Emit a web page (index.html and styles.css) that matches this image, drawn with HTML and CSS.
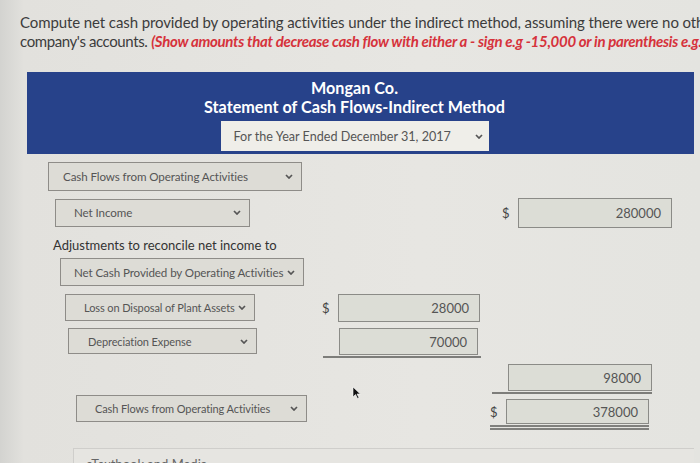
FILE: index.html
```html
<!DOCTYPE html>
<html>
<head>
<meta charset="utf-8">
<title>Statement of Cash Flows</title>
<link rel="stylesheet" href="styles.css">
</head>
<body>
<div class="prompt">
  <p>Compute net cash provided by operating activities under the indirect method, assuming there were no other changes in the</p>
  <p><span class="lead">company's accounts.</span> <span class="warn">(Show amounts that decrease cash flow with either a - sign e.g -15,000 or in parenthesis e.g. (15,000).)</span></p>
</div>

<div class="sheet">
  <div class="header">
    <div class="title">Mongan Co.</div>
    <div class="title">Statement of Cash Flows-Indirect Method</div>
    <div class="select date"><span>For the Year Ended December 31, 2017</span><svg class="chev" viewBox="0 0 8 5"><path d="M1 1 L4 4 L7 1"/></svg></div>
  </div>

  <div class="form">
    <div class="row r1">
      <div class="select s1"><span>Cash Flows from Operating Activities</span><svg class="chev" viewBox="0 0 8 5"><path d="M1 1 L4 4 L7 1"/></svg></div>
    </div>

    <div class="row r2">
      <div class="select s2"><span>Net Income</span><svg class="chev" viewBox="0 0 8 5"><path d="M1 1 L4 4 L7 1"/></svg></div>
      <div class="cell c2"><span class="cur">$</span><div class="amount a2">280000</div></div>
    </div>

    <div class="label">Adjustments to reconcile net income to</div>

    <div class="row r4">
      <div class="select s4"><span>Net Cash Provided by Operating Activities</span><svg class="chev" viewBox="0 0 8 5"><path d="M1 1 L4 4 L7 1"/></svg></div>
    </div>

    <div class="row r5">
      <div class="select s5"><span>Loss on Disposal of Plant Assets</span><svg class="chev" viewBox="0 0 8 5"><path d="M1 1 L4 4 L7 1"/></svg></div>
      <div class="cell c5"><span class="cur">$</span><div class="amount a5">28000</div></div>
    </div>

    <div class="row r6">
      <div class="select s6"><span>Depreciation Expense</span><svg class="chev" viewBox="0 0 8 5"><path d="M1 1 L4 4 L7 1"/></svg></div>
      <div class="cell c6 single"><span class="cur"></span><div class="amount a6">70000</div></div>
    </div>

    <div class="row r7">
      <div class="cell c7 single"><span class="cur"></span><div class="amount a7">98000</div></div>
    </div>

    <div class="row r8">
      <div class="select s8"><span>Cash Flows from Operating Activities</span><svg class="chev" viewBox="0 0 8 5"><path d="M1 1 L4 4 L7 1"/></svg></div>
      <div class="cell c8 double"><span class="cur">$</span><div class="amount a8">378000</div></div>
    </div>

    <div class="media">eTextbook and Media</div>
  </div>
</div>

<svg class="pointer" viewBox="0 0 9 13"><path d="M1 1 L1 11 L3.5 8.5 L5.5 12.5 L7 11.8 L5 8 L8.3 8 Z"/></svg>
</body>
</html>
```

FILE: styles.css
```css
html, body {
  margin: 0;
  padding: 0;
}

body {
  width: 700px;
  height: 463px;
  overflow: hidden;
  position: relative;
  background: linear-gradient(to right, #d3d3d0 0, #e2e1dd 24px, #e7e6e2 60%, #e4e4e0 100%);
  font-family: Lato, "Open Sans", "Liberation Sans", sans-serif;
  color: #3a3a3a;
}

/* ---------- prompt ---------- */
.prompt {
  padding: 13px 0 0 20px;
  font-size: 15px;
  line-height: 19px;
  letter-spacing: -0.1px;
  white-space: nowrap;
  overflow: hidden;
  color: #3c3c3c;
}

.prompt p {
  margin: 0;
}

.lead {
  letter-spacing: -0.4px;
}

.warn {
  color: #d6323b;
  font-weight: 700;
  font-style: italic;
  letter-spacing: -0.3px;
}

/* ---------- sheet ---------- */
.sheet {
  margin: 21px 6px 0 27px;
}

.header {
  background: #27428a;
  padding: 6px 12px 3px 0;
  display: flex;
  flex-direction: column;
  align-items: center;
}

.title {
  color: #ffffff;
  font-weight: 700;
  font-size: 16.2px;
  line-height: 19px;
}

/* ---------- selects ---------- */
.select {
  box-sizing: border-box;
  display: flex;
  align-items: center;
  background: #dddcd6;
  border: 1px solid #8e8c88;
  font-size: 11.6px;
  letter-spacing: -0.1px;
  color: #555;
  padding: 0 8px 0 14px;
  white-space: nowrap;
}

.select span {
  flex: 1;
}

.chev {
  width: 8px;
  height: 5px;
  flex: none;
  fill: none;
  stroke: #555;
  stroke-width: 1.7;
}

.date {
  margin-top: 5px;
  width: 268px;
  height: 30px;
  background: #efeee9;
  border: none;
  font-size: 12.6px;
  letter-spacing: 0;
  color: #555;
  padding: 0 6px 0 13px;
}

/* ---------- form rows ---------- */
.form {
  padding-top: 8px;
}

.row {
  display: flex;
  align-items: flex-start;
}

.r1 .s1 { margin-left: 21px; width: 254px; height: 29px; }

.r2 { margin-top: 6px; align-items: center; height: 31px; }
.s2 { margin-left: 28px; width: 195px; height: 28px; padding-left: 18px; }
.c2 { margin-left: 252px; }

.label {
  margin: 9px 0 0 26px;
  font-size: 13px;
  line-height: 17px;
  color: #333;
}

.r4 { margin-top: 4px; }
.s4 { margin-left: 33px; width: 244px; height: 28px; padding-left: 13px; }

.r5 { margin-top: 8px; }
.s5 { margin-left: 38px; width: 190px; height: 27px; padding-left: 18px; font-size: 11px; }
.c5 { margin-left: 67px; }

.r6 { margin-top: 6px; }
.s6 { margin-left: 41px; width: 189px; height: 26px; padding-left: 19px; font-size: 11px; }
.c6 { margin-left: 66px; padding-right: 3px; }

.r7 { margin-top: 6px; }
.c7 { margin-left: 465px; }

.r8 { margin-top: 1px; }
.s8 { margin-left: 49px; width: 231px; height: 27px; padding-left: 18px; font-size: 11px; }
.c8 { margin-left: 183px; padding-top: 4px; }

/* ---------- amount cells ---------- */
.cell {
  display: flex;
  align-items: center;
}

.cur {
  width: 16px;
  flex: none;
  font-size: 13px;
  color: #444;
}

.amount {
  box-sizing: border-box;
  background: #dcddd6;
  border: 1px solid #8b8b87;
  font-size: 13px;
  color: #555;
  padding-right: 10px;
  display: flex;
  align-items: center;
  justify-content: flex-end;
}

.a2 { width: 154px; height: 30px; }
.a5 { width: 142px; height: 28px; }
.a6 { width: 139px; height: 27px; }
.a7 { width: 144px; height: 27px; }
.a8 { width: 143px; height: 25px; }

.single {
  border-bottom: 2px solid #7d7d7a;
  padding-bottom: 1px;
}

.double {
  border-bottom: 5px double #80807d;
  padding-bottom: 1px;
}

/* ---------- eTextbook ---------- */
.media {
  margin: 18px 0 0 46px;
  border: 1px solid #cfcecb;
  border-right: none;
  background: #e6e5e1;
  padding: 7px 12px 8px;
  font-size: 13px;
  line-height: 17px;
  color: #666;
}

/* ---------- mouse pointer (overlay) ---------- */
.pointer {
  position: absolute;
  left: 352px;
  top: 386px;
  width: 9px;
  height: 13px;
  fill: #111;
  stroke: #fff;
  stroke-width: 0.6;
}
```
